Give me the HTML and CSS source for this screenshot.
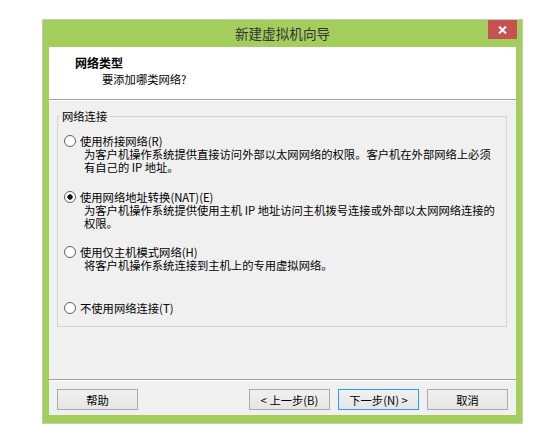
FILE: index.html
```html
<!DOCTYPE html>
<html lang="zh-CN">
<head>
    <meta charset="UTF-8">
    <title>新建虚拟机向导</title>
    <link rel="stylesheet" href="styles.css">
</head>
<body>
<div class="window">
    <div class="titlebar">
        <span class="title">新建虚拟机向导</span>
        <button class="close" type="button">
            <svg width="9" height="8" viewBox="0 0 9 8">
                <path d="M1 0.5 L8 7.5 M8 0.5 L1 7.5" stroke="#fff" stroke-width="2"/>
            </svg>
        </button>
    </div>
    <div class="client">
        <div class="header">
            <div class="header-title">网络类型</div>
            <div class="header-sub">要添加哪类网络?</div>
        </div>
        <div class="content">
            <fieldset class="group">
                <legend>网络连接</legend>
                <div class="option">
                    <label><input type="radio" name="net">使用桥接网络(R)</label>
                    <p class="desc">为客户机操作系统提供直接访问外部以太网网络的权限。客户机在外部网络上必须<br>有自己的 IP 地址。</p>
                </div>
                <div class="option">
                    <label><input type="radio" name="net" checked>使用网络地址转换(NAT)(E)</label>
                    <p class="desc">为客户机操作系统提供使用主机 IP 地址访问主机拨号连接或外部以太网网络连接的<br>权限。</p>
                </div>
                <div class="option">
                    <label><input type="radio" name="net">使用仅主机模式网络(H)</label>
                    <p class="desc">将客户机操作系统连接到主机上的专用虚拟网络。</p>
                </div>
                <div class="option last">
                    <label><input type="radio" name="net">不使用网络连接(T)</label>
                </div>
            </fieldset>
        </div>
        <div class="footer">
            <button class="btn" type="button">帮助</button>
            <span class="spacer"></span>
            <button class="btn" type="button">&lt; 上一步(B)</button>
            <button class="btn btn-default" type="button">下一步(N) &gt;</button>
            <button class="btn" type="button">取消</button>
        </div>
    </div>
</div>
</body>
</html>
```

FILE: styles.css
```css
body {
    margin: 0;
    background-color: #fff;
    font-family: "Noto Sans CJK SC", sans-serif;
    font-size: 11.3px;
    color: #000;
}

.window {
    width: 481px;
    height: 405px;
    margin: 19px 0 0 42px;
    box-sizing: border-box;
    border: 1px solid #c3cfb2;
    background-color: #a3cd5c;
    padding: 0 6px 8px;
    display: flex;
    flex-direction: column;
}

.titlebar {
    height: 27px;
    margin: 0 -6px;
    display: grid;
    grid-template-columns: 1fr auto 1fr;
    align-items: center;
}

.title {
    grid-column: 2;
    font-size: 13.6px;
    line-height: 27px;
    color: #333;
}

.close {
    grid-column: 3;
    justify-self: end;
    align-self: start;
    width: 29px;
    height: 19px;
    margin-right: 5px;
    padding: 0;
    border: none;
    background-color: #c75050;
    display: flex;
    align-items: center;
    justify-content: center;
}

.client {
    flex: 1;
    background-color: #f0f0f0;
    display: flex;
    flex-direction: column;
}

.header {
    height: 53px;
    box-sizing: border-box;
    padding: 8px 0 0 26px;
    background-color: #fff;
    border-bottom: 1px solid #a0a0a0;
    box-shadow: 0 1px 0 #fff;
}

.header-title {
    font-weight: bold;
    font-size: 12px;
    line-height: 16px;
}

.header-sub {
    margin-left: 27px;
    line-height: 16px;
}

.content {
    flex: 1;
    padding: 10px 9px 0 8px;
}

.group {
    margin: 0;
    padding: 11px 6px 11px 6px;
    border: 1px solid #d5d5d5;
}

.group legend {
    margin-left: -4px;
    padding: 0 2px;
    line-height: 13px;
}

.option {
    height: 55.5px;
}

.option.last {
    height: auto;
}

.option label {
    display: flex;
    align-items: center;
    line-height: 14px;
}

.option input {
    appearance: none;
    width: 12px;
    height: 12px;
    margin: 0 4px 0 0;
    box-sizing: border-box;
    border: 1px solid #606060;
    border-radius: 50%;
    background-color: #fff;
}

.option input:checked {
    background: radial-gradient(circle, #1a1a1a 0 2.4px, #fff 3px);
}

.desc {
    margin: 0 0 0 20px;
    line-height: 13px;
}

.footer {
    display: flex;
    gap: 8px;
    padding: 9px 8px 5px;
    border-top: 1px solid #a0a0a0;
    box-shadow: inset 0 1px 0 #fff;
}

.spacer {
    flex: 1;
}

.btn {
    width: 81px;
    height: 21px;
    padding: 0;
    border: 1px solid #acacac;
    background: linear-gradient(#f0f0f0, #e5e5e5);
    font: inherit;
    color: #000;
}

.btn-default {
    border-color: #3399ff;
}
```
